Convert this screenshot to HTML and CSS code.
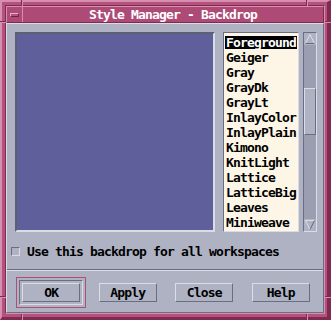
FILE: index.html
```html
<!DOCTYPE html>
<html lang="en">
<head>
    <meta charset="UTF-8">
    <meta name="viewport" content="width=device-width, initial-scale=1.0">
    <title>Style Manager - Backdrop</title>
    <link rel="stylesheet" href="styles.css">
</head>
<body>
    <div class="window">
        <!-- resize handle notches on the frame -->
        <span class="notch notch-v notch-top-left"></span>
        <span class="notch notch-v notch-top-right"></span>
        <span class="notch notch-v notch-bottom-left"></span>
        <span class="notch notch-v notch-bottom-right"></span>
        <span class="notch notch-h notch-left-top"></span>
        <span class="notch notch-h notch-left-bottom"></span>
        <span class="notch notch-h notch-right-top"></span>
        <span class="notch notch-h notch-right-bottom"></span>

        <div class="inner">
            <div class="titlebar">
                <div class="menu-btn"><span class="menu-bar"></span></div>
                <div class="title">Style Manager - Backdrop</div>
            </div>

            <div class="panel">
                <div class="main">
                    <div class="preview"></div>
                    <ul class="list">
                        <li><span class="selected">Foreground</span></li>
                        <li>Geiger</li>
                        <li>Gray</li>
                        <li>GrayDk</li>
                        <li>GrayLt</li>
                        <li>InlayColor</li>
                        <li>InlayPlain</li>
                        <li>Kimono</li>
                        <li>KnitLight</li>
                        <li>Lattice</li>
                        <li>LatticeBig</li>
                        <li>Leaves</li>
                        <li>Miniweave</li>
                    </ul>
                    <div class="scrollbar">
                        <div class="arrow">
                            <svg width="12" height="12" viewBox="0 0 12 12">
                                <polygon points="6,1.5 10.5,10.5 1.5,10.5" fill="#aeb2c3"/>
                                <path d="M1.5 10.5 L6 1.5 L10.5 10.5" fill="none" stroke="#dcdee8"/>
                                <path d="M1.5 10.5 H10.5" fill="none" stroke="#666a7c"/>
                            </svg>
                        </div>
                        <div class="trough-top"></div>
                        <div class="slider"></div>
                        <div class="trough-rest"></div>
                        <div class="arrow">
                            <svg width="12" height="12" viewBox="0 0 12 12">
                                <polygon points="1.5,1.5 10.5,1.5 6,10.5" fill="#aeb2c3"/>
                                <path d="M10.5 1.5 H1.5 L6 10.5" fill="none" stroke="#dcdee8"/>
                                <path d="M6 10.5 L10.5 1.5" fill="none" stroke="#666a7c"/>
                            </svg>
                        </div>
                    </div>
                </div>

                <label class="check-row"><span class="checkbox"></span>Use this backdrop for all workspaces</label>

                <div class="separator"></div>

                <div class="buttons">
                    <div class="default-ring">
                        <div class="ring-frame"><button class="btn">OK</button></div>
                    </div>
                    <button class="btn">Apply</button>
                    <button class="btn">Close</button>
                    <button class="btn">Help</button>
                </div>
            </div>
        </div>
    </div>
</body>
</html>
```

FILE: styles.css
```css
body {
    margin: 0;
    background: #b4527c;
    font-family: "DejaVu Sans Mono", "Liberation Mono", monospace;
}
.window {
    position: relative;
    box-sizing: border-box;
    width: 331px;
    height: 320px;
    background: #b4527c;
    border-style: solid;
    border-width: 2px 4px 3px 2px;
    border-color: #d68fb0 #7f2a50 #7f2a50 #d68fb0;
    padding: 3px 2px 3px 3px;
}
.notch {
    position: absolute;
    box-sizing: border-box;
}
.notch-v {
    width: 2px;
    height: 6px;
    border-left: 1px solid #7f2a50;
    border-right: 1px solid #d68fb0;
}
.notch-h {
    width: 6px;
    height: 2px;
    border-top: 1px solid #7f2a50;
    border-bottom: 1px solid #d68fb0;
}
.notch-top-left { top: -2px; left: 19px; }
.notch-top-right { top: -2px; left: 304px; }
.notch-bottom-left { bottom: -3px; left: 19px; }
.notch-bottom-right { bottom: -3px; left: 304px; }
.notch-left-top { left: -2px; top: 19px; }
.notch-left-bottom { left: -2px; top: 294px; }
.notch-right-top { right: -4px; top: 19px; }
.notch-right-bottom { right: -4px; top: 294px; }

.inner {
    height: 100%;
    box-sizing: border-box;
    border: 1px solid;
    border-color: #7f2a50 #d68fb0 #d68fb0 #7f2a50;
    display: flex;
    flex-direction: column;
}
.titlebar {
    display: flex;
    height: 17px;
    flex: none;
    box-sizing: border-box;
    background: #ad4b76;
    border: 1px solid;
    border-color: #d68fb0 #7f2a50 #7f2a50 #d68fb0;
}
.menu-btn {
    width: 15px;
    border-right: 1px solid #d68fb0;
    display: flex;
    align-items: center;
    justify-content: center;
}
.menu-bar {
    width: 9px;
    height: 4px;
    box-sizing: border-box;
    background: #b4527c;
    border: 1px solid;
    border-color: #e6abc5 #6e2446 #6e2446 #e6abc5;
}
.title {
    flex: 1;
    text-align: center;
    color: #fff;
    font-weight: bold;
    font-size: 13px;
    line-height: 15px;
    letter-spacing: -0.83px;
}

.panel {
    flex: 1;
    box-sizing: border-box;
    background: #aeb2c3;
    border: 1px solid;
    border-color: #d9dce6 #6b6e80 #6b6e80 #d9dce6;
    display: flex;
    flex-direction: column;
    font-weight: bold;
    font-size: 13px;
    letter-spacing: -0.83px;
    color: #000;
}
.main {
    display: flex;
    height: 200px;
    padding: 8px 0 0 8px;
}
.preview {
    width: 200px;
    height: 200px;
    box-sizing: border-box;
    background: #5f5f9b;
    border: 2px solid;
    border-color: #5d6070 #dadce6 #dadce6 #5d6070;
}
.list {
    margin: 0 0 0 8px;
    padding: 3px 0 0 1px;
    width: 76px;
    height: 200px;
    box-sizing: border-box;
    list-style: none;
    overflow: hidden;
    background: #fdf6e6;
    border: 1px solid;
    border-color: #6b6e80 #dadce6 #dadce6 #6b6e80;
}
.list li {
    height: 13px;
    line-height: 13px;
    margin-bottom: 2px;
    padding-left: 1px;
    white-space: nowrap;
}
.list li:first-child {
    padding-left: 0;
}
.list .selected {
    display: inline-block;
    height: 13px;
    padding: 0 1px;
    background: #000;
    color: #fff;
}
.scrollbar {
    margin-left: 4px;
    width: 14px;
    height: 200px;
    box-sizing: border-box;
    background: #9a9eb0;
    border: 1px solid;
    border-color: #6b6e80 #dadce6 #dadce6 #6b6e80;
    display: flex;
    flex-direction: column;
}
.arrow {
    height: 12px;
    flex: none;
    background: #aeb2c3;
}
.arrow svg {
    display: block;
}
.trough-top {
    height: 43px;
    flex: none;
}
.slider {
    height: 47px;
    flex: none;
    box-sizing: border-box;
    background: #aeb2c3;
    border: 1px solid;
    border-color: #dadce6 #6b6e80 #6b6e80 #dadce6;
}
.trough-rest {
    flex: 1;
}

.check-row {
    display: flex;
    align-items: center;
    height: 14px;
    margin: 12px 0 0 4px;
    white-space: nowrap;
}
.checkbox {
    width: 9px;
    height: 9px;
    box-sizing: border-box;
    margin-right: 7px;
    border: 1px solid;
    border-color: #6b6e80 #dadce6 #dadce6 #6b6e80;
}
.separator {
    margin-top: 11px;
    border-top: 1px solid #6b6e80;
    border-bottom: 1px solid #dadce6;
}
.buttons {
    display: grid;
    grid-template-columns: repeat(4, 1fr);
    justify-items: center;
    align-items: center;
    padding: 6px 4px 0 6px;
}
.default-ring {
    border: 1px solid #b04e78;
    padding: 2px;
}
.ring-frame {
    display: flex;
    padding: 2px;
    border: 1px solid;
    border-color: #6b6e80 #dadce6 #dadce6 #6b6e80;
}
.btn {
    width: 58px;
    height: 19px;
    box-sizing: border-box;
    padding: 0;
    margin: 0;
    background: #aeb2c3;
    border: 1px solid;
    border-color: #dadce6 #6b6e80 #6b6e80 #dadce6;
    font-family: "DejaVu Sans Mono", "Liberation Mono", monospace;
    font-weight: bold;
    font-size: 13px;
    letter-spacing: -0.83px;
    color: #000;
}
```
